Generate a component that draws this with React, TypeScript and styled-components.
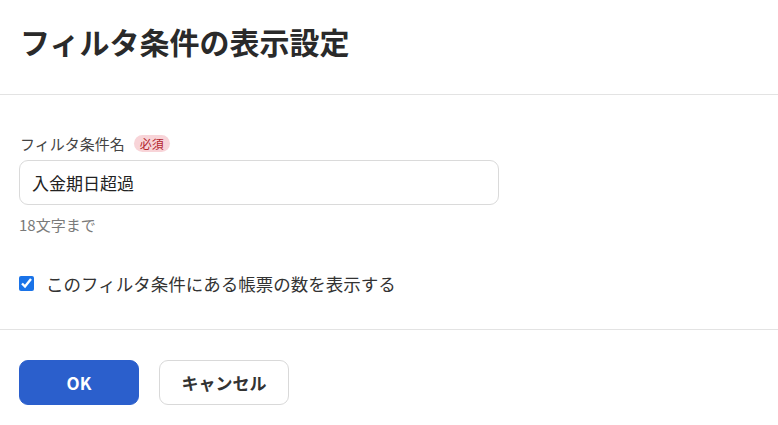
import styled, { createGlobalStyle } from "styled-components";
import { useState } from "react";

const GlobalStyle = createGlobalStyle`
  html, body {
    margin: 0;
    padding: 0;
    background: #ffffff;
  }
  body {
    font-family: "Noto Sans CJK JP", "Noto Sans", sans-serif;
    color: #333333;
  }
  * {
    box-sizing: border-box;
  }
`;

const Dialog = styled.div`
  width: 778px;
  height: 425px;
  display: flex;
  flex-direction: column;
  background: #ffffff;
`;

const Header = styled.header`
  height: 95px;
  padding: 21px 20px 0;
  border-bottom: 1px solid #e3e3e3;
`;

const Title = styled.h1`
  margin: 0;
  font-size: 30px;
  line-height: 40px;
  font-weight: 700;
  color: #2a2a2a;
`;

const Body = styled.section`
  padding: 38px 19px 34px;
  border-bottom: 1px solid #e3e3e3;
`;

const LabelRow = styled.div`
  display: flex;
  align-items: center;
  gap: 9px;
  height: 20px;
  margin-bottom: 7px;
`;

const Label = styled.label`
  font-size: 15px;
  color: #444444;
  padding-left: 1px;
`;

const Badge = styled.span`
  display: inline-flex;
  align-items: center;
  height: 17px;
  padding: 0 6px;
  border-radius: 9px;
  background: #f8d4d8;
  color: #b3262e;
  font-size: 12px;
`;

const TextInput = styled.input`
  display: block;
  width: 480px;
  height: 45px;
  padding: 0 12px;
  border: 1px solid #dadada;
  border-radius: 9px;
  font-family: inherit;
  font-size: 17px;
  color: #222222;
  outline: none;
`;

const Help = styled.div`
  margin-top: 10px;
  font-size: 15px;
  line-height: 20px;
  color: #7a7a7a;
`;

const CheckRow = styled.label`
  display: flex;
  align-items: center;
  gap: 12px;
  height: 24px;
  margin-top: 36px;
  font-size: 17.5px;
  color: #333333;
`;

const Check = styled.input`
  margin: 0;
  width: 15px;
  height: 15px;
  accent-color: #1a73e8;
`;

const Footer = styled.footer`
  display: flex;
  gap: 20px;
  padding: 30px 19px 0;
`;

const Button = styled.button<{ $primary?: boolean }>`
  height: 45px;
  width: ${(p) => (p.$primary ? "120px" : "130px")};
  border-radius: 9px;
  font-family: inherit;
  font-size: 17px;
  font-weight: 700;
  cursor: pointer;
  border: 1px solid ${(p) => (p.$primary ? "#2b5fcc" : "#d9d9d9")};
  background: ${(p) => (p.$primary ? "#2b5fcc" : "#ffffff")};
  color: ${(p) => (p.$primary ? "#ffffff" : "#333333")};
`;

function App() {
  const [name, setName] = useState("入金期日超過");
  const [showCount, setShowCount] = useState(true);

  return (
    <>
      <GlobalStyle />
      <Dialog>
        <Header>
          <Title>フィルタ条件の表示設定</Title>
        </Header>
        <Body>
          <LabelRow>
            <Label htmlFor="filter-name">フィルタ条件名</Label>
            <Badge>必須</Badge>
          </LabelRow>
          <TextInput
            id="filter-name"
            value={name}
            onChange={(e) => setName(e.target.value)}
          />
          <Help>18文字まで</Help>
          <CheckRow>
            <Check
              type="checkbox"
              checked={showCount}
              onChange={(e) => setShowCount(e.target.checked)}
            />
            このフィルタ条件にある帳票の数を表示する
          </CheckRow>
        </Body>
        <Footer>
          <Button $primary>OK</Button>
          <Button>キャンセル</Button>
        </Footer>
      </Dialog>
    </>
  );
}

export default App;
